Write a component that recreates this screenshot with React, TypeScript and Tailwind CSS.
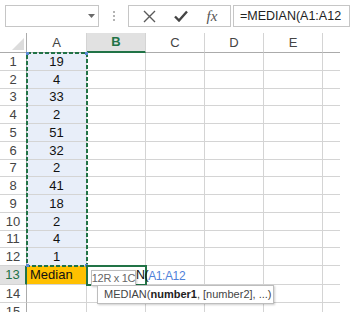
import React from 'react';

const FONT = "font-['Liberation_Sans',Arial,sans-serif]";

const cols = [
  { label: 'A', w: 'w-[60px]', selected: false },
  { label: 'B', w: 'w-[59px]', selected: true },
  { label: 'C', w: 'w-[59px]', selected: false },
  { label: 'D', w: 'w-[59px]', selected: false },
  { label: 'E', w: 'w-[59px]', selected: false },
  { label: '', w: 'w-[17px]', selected: false },
];

// row heights of the screenshot are not quite even
const rows = [
  { n: 1, v: '19', h: 'h-[18px]' },
  { n: 2, v: '4', h: 'h-[18px]' },
  { n: 3, v: '33', h: 'h-[17px]' },
  { n: 4, v: '2', h: 'h-[18px]' },
  { n: 5, v: '51', h: 'h-[18px]' },
  { n: 6, v: '32', h: 'h-[18px]' },
  { n: 7, v: '2', h: 'h-[17px]' },
  { n: 8, v: '41', h: 'h-[18px]' },
  { n: 9, v: '18', h: 'h-[18px]' },
  { n: 10, v: '2', h: 'h-[18px]' },
  { n: 11, v: '4', h: 'h-[17px]' },
  { n: 12, v: '1', h: 'h-[18px]' },
  { n: 13, v: 'Median', h: 'h-[19px]' },
  { n: 14, v: '', h: 'h-[18px]' },
  { n: 15, v: '', h: 'h-[18px]' },
];

function Toolbar() {
  return (
    <div className="h-[33px] flex items-start pt-[5px]">
      <div className="ml-[5px] w-[94px] h-[22px] border border-[#c6c6c6] flex items-center justify-end pr-[3px]">
        <svg width="7" height="4" viewBox="0 0 7 4">
          <path d="M0 0 H7 L3.5 4 Z" fill="#6a6a6a" />
        </svg>
      </div>
      <div className="w-[29px] h-[22px] flex flex-col items-center justify-center gap-[2px]">
        <span className="w-[2px] h-[2px] bg-[#b4b4b4]" />
        <span className="w-[2px] h-[2px] bg-[#b4b4b4]" />
        <span className="w-[2px] h-[2px] bg-[#b4b4b4]" />
      </div>
      <div className="w-[103px] h-[22px] border border-[#c6c6c6] flex items-center">
        <div className="w-[36px] flex justify-center pl-[4px]">
          <svg width="13" height="13" viewBox="0 0 13 13">
            <path d="M1 1 L12 12 M12 1 L1 12" stroke="#5a5a5a" strokeWidth="1.4" />
          </svg>
        </div>
        <div className="w-[31px] flex justify-center">
          <svg width="14" height="12" viewBox="0 0 14 12">
            <path d="M1 6.5 L5 10.5 L13 1.5" stroke="#444" strokeWidth="2.4" fill="none" />
          </svg>
        </div>
        <div className="flex-1 flex justify-center pr-[2px]">
          <span className="font-['Liberation_Serif',serif] italic text-[15px] leading-none text-[#555]">fx</span>
        </div>
      </div>
      <div className="ml-[2px] flex-1 h-[22px] border border-[#c6c6c6] flex items-center pl-[6px] text-[12.5px] text-[#222]">
        =MEDIAN(A1:A12
      </div>
    </div>
  );
}

function HeaderRow() {
  return (
    <div className="flex h-[20px]">
      <div className="w-[27px] border-r border-b border-[#ababab] flex items-end justify-end p-[2px]">
        <svg width="12" height="12" viewBox="0 0 12 12">
          <path d="M12 0 V12 H0 Z" fill="#dcdcdc" />
        </svg>
      </div>
      {cols.map((c) =>
        c.selected ? (
          <div
            key={c.label}
            className={`${c.w} bg-[#e1e1e1] border-r border-[#d4d4d4] border-b-2 border-b-[#217346] flex items-center justify-center text-[13px] font-bold text-[#217346]`}
          >
            {c.label}
          </div>
        ) : (
          <div
            key={c.label || 'f'}
            className={`${c.w} ${c.label ? 'border-r' : ''} border-b border-[#d4d4d4] border-b-[#ababab] flex items-center justify-center text-[13px] text-[#444]`}
          >
            {c.label}
          </div>
        ),
      )}
    </div>
  );
}

function Row({ n, v, h }: { n: number; v: string; h: string }) {
  const inData = n <= 12;
  const isMedian = n === 13;
  return (
    <div className={`flex ${h}`}>
      {isMedian ? (
        <div className="w-[27px] bg-[#e1e1e1] border-r-2 border-r-[#217346] border-b border-b-[#d4d4d4] flex items-center justify-center text-[13px] text-[#217346]">
          {n}
        </div>
      ) : (
        <div className="w-[27px] border-r border-r-[#ababab] border-b border-b-[#d4d4d4] flex items-center justify-center text-[13px] text-[#444]">
          {n}
        </div>
      )}
      {cols.map((c, i) => {
        if (i === 0 && inData)
          return (
            <div key={i} className={`${c.w} bg-[#e8eef9] border-r border-b border-[#d4d4d4] flex items-center justify-center text-[13px] text-[#111]`}>
              {v}
            </div>
          );
        if (i === 0 && isMedian)
          return (
            <div key={i} className={`${c.w} bg-[#ffc000] border-r border-b border-[#d4d4d4] flex items-center pl-[3px] text-[13px] text-[#111]`}>
              {v}
            </div>
          );
        return <div key={i} className={`${c.w} ${c.label ? 'border-r' : ''} border-b border-[#d4d4d4]`} />;
      })}
    </div>
  );
}

export default function App() {
  return (
    <div className={`relative w-[350px] h-[318px] bg-white overflow-hidden ${FONT}`}>
      <Toolbar />
      <div className="w-[340px] h-[279px] overflow-hidden">
        <HeaderRow />
        {rows.map((r) => (
          <Row key={r.n} {...r} />
        ))}
      </div>

      {/* copy range marching ants around A1:A12 */}
      <svg className="absolute left-[26px] top-[52px]" width="62" height="215" viewBox="0 0 62 215">
        <rect x="1" y="1" width="60" height="213" fill="none" stroke="#217346" strokeWidth="2" strokeDasharray="4 2" />
        <rect x="0" y="0" width="3" height="3" fill="#5b8ad6" />
        <rect x="59" y="0" width="3" height="3" fill="#5b8ad6" />
        <rect x="0" y="212" width="3" height="3" fill="#5b8ad6" />
        <rect x="59" y="212" width="3" height="3" fill="#5b8ad6" />
      </svg>

      {/* active cell B13, its formula mostly hidden under the size hint */}
      <div className="absolute left-[86px] top-[265px] w-[61px] h-[21px] border-2 border-[#217346]" />
      <div className="absolute left-[136px] top-[267px] h-[17px] flex items-center whitespace-nowrap text-[12.5px] text-[#111]">
        <span className="tracking-[-0.5px]">N(</span>
        <span className="text-[12px] tracking-[-0.4px] text-[#4f81d9]">A1:A12</span>
      </div>

      <div className="absolute left-[91px] top-[270px] w-[45px] h-[16px] bg-white border border-[#bdbdbd] shadow-[1px_1px_2px_rgba(0,0,0,0.2)] flex items-center justify-center text-[11px] tracking-[-0.3px] text-[#666] whitespace-nowrap">
        12R x 1C
      </div>

      <div className="absolute left-[97px] top-[285px] w-[177px] h-[19px] bg-white border border-[#bdbdbd] shadow-[1px_1px_2px_rgba(0,0,0,0.2)] flex items-center pl-[6px] text-[11px] text-[#444] whitespace-nowrap">
        MEDIAN(<b className="text-[#222]">number1</b>, [number2], ...)
      </div>
    </div>
  );
}
